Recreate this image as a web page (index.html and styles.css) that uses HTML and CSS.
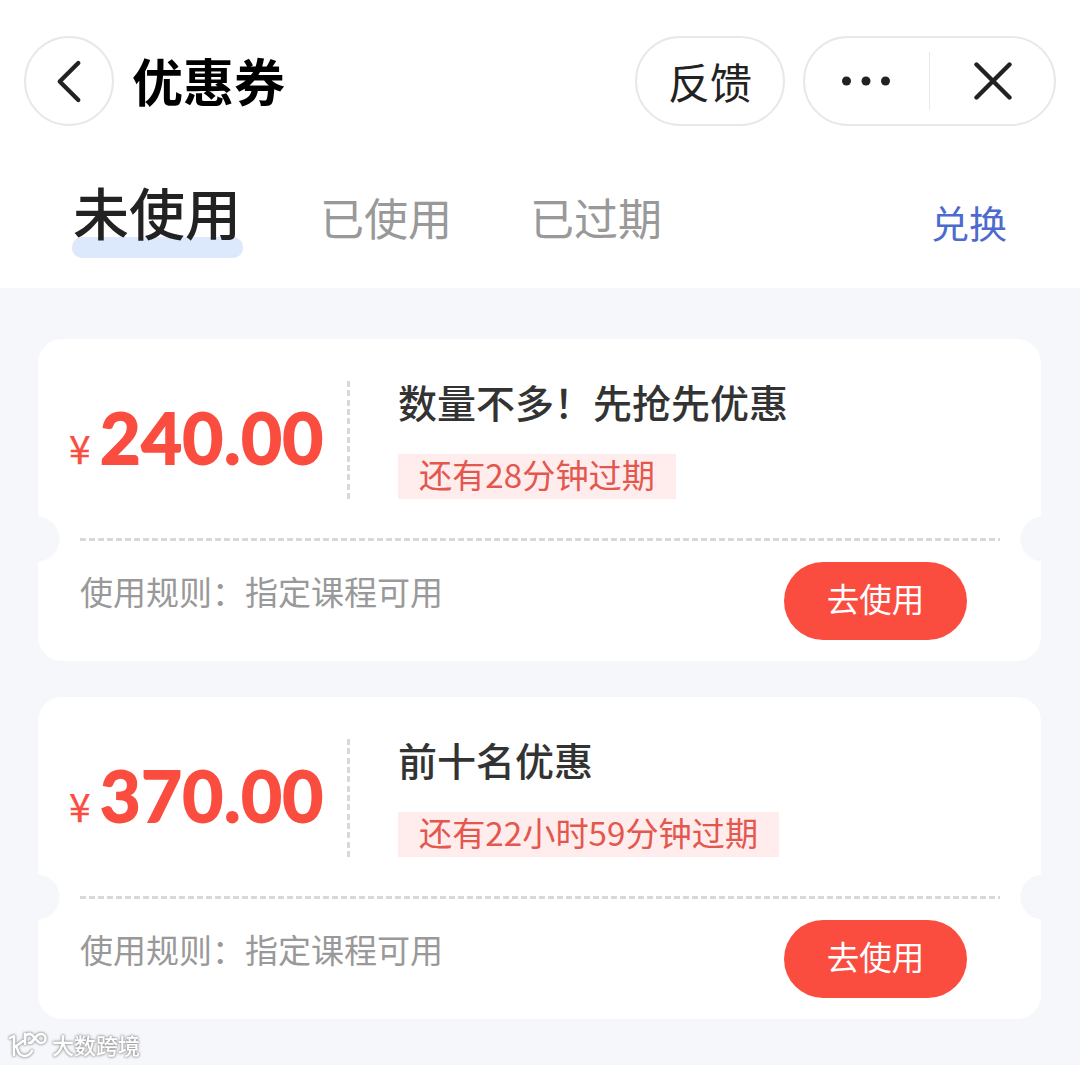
FILE: index.html
```html
<!DOCTYPE html>
<html lang="zh-CN">
<head>
    <meta charset="UTF-8">
    <meta name="viewport" content="width=device-width, initial-scale=1.0">
    <title>优惠券</title>
    <link rel="stylesheet" href="styles.css">
</head>
<body>
    <header class="header">
        <button class="back-btn" aria-label="返回">
            <svg width="88" height="88" viewBox="0 0 88 88">
                <path d="M53.500 25.500L34.500 44.500L53.500 63.500" />
            </svg>
        </button>
        <h1 class="title">优惠券</h1>
        <button class="feedback-btn">反馈</button>
        <div class="capsule">
            <button class="capsule-btn" aria-label="更多">
                <svg class="dots" width="52" height="12" viewBox="0 0 52 12">
                    <circle cx="5.500" cy="6" r="4.500" />
                    <circle cx="25" cy="6" r="4.500" />
                    <circle cx="44.500" cy="6" r="4.500" />
                </svg>
            </button>
            <span class="capsule-line"></span>
            <button class="capsule-btn" aria-label="关闭">
                <svg width="40" height="40" viewBox="0 0 40 40">
                    <path d="M4.500 3.500L37.500 36.500M37.500 3.500L4.500 36.500" />
                </svg>
            </button>
        </div>
    </header>

    <nav class="tabs">
        <a class="tab active">未使用</a>
        <a class="tab">已使用</a>
        <a class="tab">已过期</a>
        <a class="exchange">兑换</a>
    </nav>

    <main class="coupon-list">
        <section class="coupon">
            <div class="coupon-top">
                <div class="price"><span class="yen">¥</span>240.00</div>
                <div class="info">
                    <h2>数量不多！先抢先优惠</h2>
                    <span class="expire">还有28分钟过期</span>
                </div>
            </div>
            <div class="coupon-bottom">
                <p class="rule">使用规则：指定课程可用</p>
                <button class="use-btn">去使用</button>
            </div>
        </section>

        <section class="coupon">
            <div class="coupon-top">
                <div class="price"><span class="yen">¥</span>370.00</div>
                <div class="info">
                    <h2>前十名优惠</h2>
                    <span class="expire">还有22小时59分钟过期</span>
                </div>
            </div>
            <div class="coupon-bottom">
                <p class="rule">使用规则：指定课程可用</p>
                <button class="use-btn">去使用</button>
            </div>
        </section>
    </main>

    <div class="watermark">
        <svg width="40" height="32" viewBox="0 0 40 32">
            <path d="M2 8L6 6V25M15 11L7 17M9 18C11 28 20 28 24 21M17 4V14M17 8A4.500 4.500 0 1 1 21 13C26 13 27 4 33 4A4.500 4.500 0 1 1 33 13C28 13 27 4 21 4" />
        </svg>
        <span>大数跨境</span>
    </div>
</body>
</html>
```

FILE: styles.css
```css
* {
    box-sizing: border-box;
}

body {
    margin: 0;
    height: 1065px;
    overflow: hidden;
    background-color: #f5f7fb;
    font-family: "Noto Sans CJK SC", sans-serif;
    color: #222;
}

h1, h2, p {
    margin: 0;
}

button {
    padding: 0;
    border: none;
    background: none;
    font-family: inherit;
    color: inherit;
}

svg {
    display: block;
    fill: none;
    stroke: #222;
    stroke-width: 4.4;
    stroke-linecap: round;
    stroke-linejoin: round;
}

/* top bar */
.header {
    display: flex;
    align-items: center;
    height: 162px;
    padding: 0 24px;
    background-color: #fff;
}

.back-btn {
    display: flex;
    align-items: center;
    justify-content: center;
    width: 90px;
    height: 90px;
    border: 2px solid #e8e8e8;
    border-radius: 50%;
}

.title {
    margin-left: 18px;
    padding-bottom: 2px;
    font-size: 51px;
    line-height: 60px;
    font-weight: 700;
    color: #000;
}

.feedback-btn {
    width: 150px;
    height: 90px;
    margin-left: auto;
    border: 2px solid #e8e8e8;
    border-radius: 45px;
    font-size: 42px;
    line-height: 60px;
}

.capsule {
    display: flex;
    align-items: center;
    width: 253px;
    height: 90px;
    margin-left: 18px;
    border: 2px solid #e8e8e8;
    border-radius: 45px;
}

.capsule-btn {
    flex: 1;
    display: flex;
    justify-content: center;
}

.capsule-line {
    width: 1px;
    height: 58px;
    background-color: #e8e8e8;
}

.dots {
    fill: #222;
    stroke: none;
}

/* tabs */
.tabs {
    display: flex;
    align-items: flex-start;
    height: 126px;
    padding: 0 73px 0 72px;
    background-color: #fff;
}

.tab {
    margin-top: 25px;
    margin-right: 78px;
    font-size: 44px;
    line-height: 60px;
    color: #999;
}

.tab.active {
    position: relative;
    z-index: 0;
    width: 171px;
    height: 78px;
    margin-top: 18px;
    margin-right: 77px;
    padding-left: 1px;
    font-size: 56px;
    line-height: 62px;
    font-weight: 500;
    color: #222;
}

/* highlight bar under the current tab */
.tab.active::after {
    content: "";
    position: absolute;
    z-index: -1;
    left: 0;
    bottom: 0;
    width: 100%;
    height: 21px;
    border-radius: 10px;
    background-color: #dce8fb;
}

.exchange {
    margin-top: 30px;
    margin-left: auto;
    font-size: 38px;
    line-height: 60px;
    color: #4d6bcd;
}

/* coupons */
.coupon-list {
    display: flex;
    flex-direction: column;
    gap: 36px;
    padding: 51px 39px 0 38px;
}

.coupon {
    height: 322px;
    border-radius: 24px;
    background:
        radial-gradient(circle at -1px 200px, #f5f7fb 22px, transparent 23px),
        radial-gradient(circle at 1005px 200px, #f5f7fb 22px, transparent 23px),
        #fff;
}

.coupon-top {
    display: flex;
    height: 202px;
    margin: 0 41px 0 42px;
    padding-top: 42px;
    background: repeating-linear-gradient(90deg, #d8d8d8 0 6px, transparent 6px 9px) no-repeat bottom / 100% 3px;
}

.price {
    width: 282px;
    height: 118px;
    margin-left: -12px;
    padding-left: 1px;
    background: repeating-linear-gradient(#d8d8d8 0 6px, transparent 6px 9.350px) no-repeat right top / 3px 100%;
    font-family: Lato, sans-serif;
    font-size: 70px;
    line-height: 112px;
    font-weight: 700;
    letter-spacing: 0.7px;
    color: #fa4d40;
    white-space: nowrap;
    -webkit-text-stroke: 1.8px #fa4d40;
}

.yen {
    display: inline-block;
    width: 31px;
    font-family: "Noto Sans CJK SC", sans-serif;
    font-size: 39px;
    line-height: 1;
    font-weight: 400;
    -webkit-text-stroke: 0.3px #fa4d40;
}

.info {
    margin-left: 48px;
}

.info h2 {
    font-size: 39px;
    line-height: 40px;
    font-weight: 500;
    color: #333;
}

.expire {
    display: inline-block;
    height: 45px;
    margin-top: 33px;
    padding: 0 21px;
    background-color: #ffecec;
    font-size: 33.200px;
    line-height: 39px;
    color: #e4574e;
}

.coupon-bottom {
    display: flex;
    justify-content: space-between;
    padding: 21px 74px 0 42px;
}

.rule {
    font-size: 33px;
    line-height: 58px;
    color: #999;
}

.use-btn {
    width: 183px;
    height: 78px;
    padding-bottom: 6px;
    border-radius: 39px;
    background-color: #fa4d40;
    font-size: 32.500px;
    line-height: 60px;
    color: #fff;
}

/* watermark over the page corner */
.watermark {
    position: absolute;
    left: 8px;
    bottom: 3px;
    display: flex;
    align-items: center;
    gap: 4px;
    font-size: 22px;
    line-height: 28px;
    color: #fff;
    filter: drop-shadow(0 0 1px #999) drop-shadow(0 0 1px #aaa);
}

.watermark span {
    padding-bottom: 4px;
    font-weight: 500;
}

.watermark svg {
    stroke: #fff;
    stroke-width: 2.5;
}
```
